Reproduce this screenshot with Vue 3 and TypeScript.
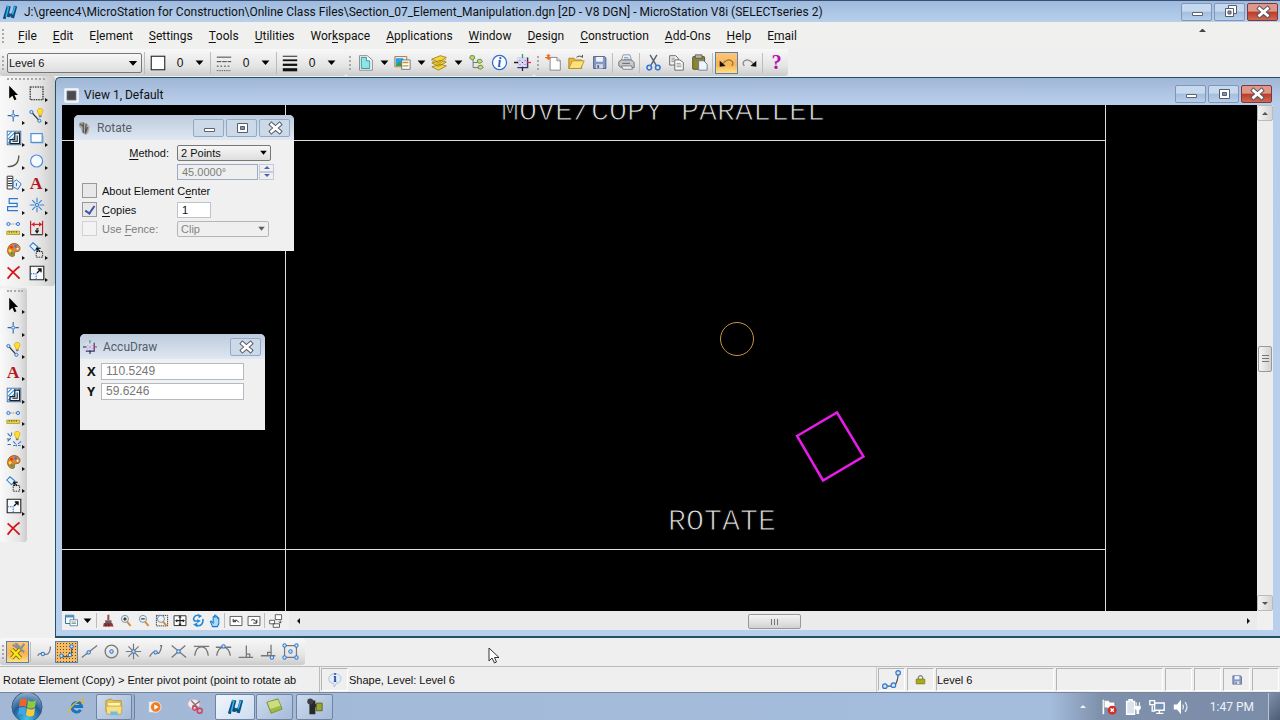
<script setup lang="ts">
import { h, ref } from 'vue'

const blue = '#2f78d0'
const node = (x: number, y: number, r = 2) =>
  `<circle cx="${x}" cy="${y}" r="${r}" fill="#cfe3fb" stroke="${blue}" stroke-width="1.2"/>`
const lensRim = '<circle cx="8.500" cy="7" r="5" fill="#eaf4fb" stroke="#70879b" stroke-width="1.300"/><path d="M11.500 11l5 6" stroke="#d98b35" stroke-width="2.800"/>'
const bulb =
  '<path d="M14 .500c-3 0-4.200 2.600-3.200 4.500l1.600 2.500v2h3.200v-2L17.200 5c1-1.900-.2-4.500-3.200-4.500z" fill="#ffdf2e" stroke="#c79a10" stroke-width=".8"/><path d="M12.400 9.500h3.200v2h-3.200z" fill="#77797c"/>'
const hatch =
  `<rect x="1.500" y="1.500" width="17" height="17" fill="#fff" stroke="#2d5f96" stroke-width="1"/><path d="M2 7l5-5M2 12l10-10M2 17L17 2" stroke="#3f97e0" stroke-width="1.600"/><path d="M17 4v13H5v-5h6V4z" fill="#e6eef6" stroke="#16222e" stroke-width="1.500"/><path d="M14 7v7H8" fill="none" stroke="#16222e" stroke-width="1.300"/>`
const accu =
  '<rect x="3.500" y="3.500" width="13" height="13" fill="#dcd6f6"/><path d="M16 4v12H4" fill="none" stroke="#3b3566" stroke-width="1.700"/><path d="M10 0v5" stroke="#2cab3e" stroke-width="1.500"/><path d="M15 10h5" stroke="#e02f38" stroke-width="1.500"/><path d="M0 10h5M10 15v5" stroke="#222" stroke-width="1.500"/><path d="M9.300 9.300h1.400v1.400H9.300zM6.500 7h1v1h-1zM12.500 7h1v1h-1zM6.500 12h1v1h-1zM12.500 12h1v1h-1z" fill="#444"/>'
const floppy =
  '<path d="M3 3h13l1.500 1.500V17H3z" fill="#8698c5" stroke="#48557f"/><path d="M6 3.500h8V9H6z" fill="#f1f4fa"/><path d="M6 12h8v5H6z" fill="#d5dbe9"/><path d="M7.500 13h2v3.500h-2z" fill="#55628c"/>'
const info =
  '<circle cx="10" cy="10" r="8.300" fill="#fff" stroke="#2c6fd0" stroke-width="1.500"/><text x="10" y="15.500" text-anchor="middle" font-family="Liberation Serif, serif" font-style="italic" font-weight="bold" font-size="16" fill="#1d5fc4">i</text>'
const snapCurve = '<path d="M2 16q4-8 8-4.500t6-8.500h-2" fill="none" stroke="#777" stroke-width="1.500"/>'

const icons: Record<string, string> = {
  logo: '<path d="M1 18L6 2l5 1-2 8c1 2 3 1 4-1l2-8 4 1-4 15-4-1 .5-2c-2 2-4 2-6 0L4.500 19z" fill="#0c4f80"/><path d="M6 3l2 1-3 12M14 3l2 1-3 9" fill="none" stroke="#38b5e8" stroke-width="1.800"/>',
  pointer: '<path d="M4 1v16l4-3.600L10.500 19l2.600-1.200-2.500-5.300H15z" fill="#000"/>',
  fence: '<rect x="1.500" y="2.500" width="16" height="16" fill="none" stroke="#111" stroke-width="1.300" stroke-dasharray="2 1"/>',
  point: `<path d="M9 2.500v4.500M9 12v5M2 9.500h4.500M11.500 9.500H16" stroke="#3565a8" stroke-width="1.400"/>${node(9, 9.5)}`,
  smartline: `<path d="M3 5l10 11" stroke="#333" stroke-width="1.500"/>${node(3, 5)}${node(13, 16)}${bulb}`,
  hatch,
  rect: `<path d="M3 16.500h15V7" fill="none" stroke="#9ab" opacity=".7"/><rect x="2.500" y="4.500" width="14" height="11" fill="#fbfdff" stroke="#4d90dc" stroke-width="1.500"/>`,
  arc: '<path d="M16 3c0 8-4 14-14 14" fill="none" stroke="#55594a" stroke-width="1.700"/>',
  circle: `<circle cx="9.500" cy="10" r="7.500" fill="#f6fbff" stroke="#4d90dc" stroke-width="1.500"/>`,
  pattern: `<path d="M1.500 1.500h7v16h-7z" fill="#fff" stroke="#333" stroke-width="1.200"/><path d="M2 4.500h6M2 7.500h6M2 10.500h6M2 13.500h6" stroke="#333" stroke-width="1.300"/><path d="M9 15V9l4-3 6 5-4 7z" fill="#e3f0fd" stroke="${blue}" stroke-width="1.200"/><path d="M13 10v4" stroke="#333"/>`,
  textA: '<text x="9" y="17" text-anchor="middle" font-family="Liberation Serif, serif" font-weight="bold" font-size="22" fill="#b31820">A</text>',
  curve: `<path d="M15 2H4v6h10v4H2v5h13" fill="none" stroke="${blue}" stroke-width="1.500"/>`,
  burst: `<path d="M10 1v6M10 13v6M1 10h6M13 10h6M4 4l4 4M12 12l4 4M16 4l-4 4M8 12l-4 4" stroke="#3b83cc" stroke-width="1.400"/>${node(10, 10)}`,
  measure: `<path d="M5 5h9" stroke="#888" stroke-dasharray="2 1"/>${node(3, 5)}${node(15, 5)}<path d="M1 14h16v4H1z" fill="#e8d84c" stroke="#a39324"/><path d="M4 14v2M7 14v2M10 14v2M13 14v2" stroke="#594f12"/>`,
  dimension: '<path d="M2 1v17M17 1v17" stroke="#b4232a" stroke-width="1.400"/><path d="M3 5.500h14" stroke="#d9232a" stroke-width="1.500"/><path d="M3 5.500l4-3v6zM16.500 5.500l-4-3v6z" fill="#d9232a"/><path d="M10 15v-4h2M8 13l2 3 2-3M2 18.500h15" fill="none" stroke="#111" stroke-width="1.300"/>',
  palette: '<path d="M10 2C5 2 2 6 2 11c0 4 3 7 6 7 2 0 3-1 2.500-3-.5-2 1-3 3-3 3 0 4-2 4-4 0-4-4-6-7.500-6z" fill="#d98832" stroke="#8a4e17"/><circle cx="7" cy="6.500" r="1.800" fill="#e32"/><circle cx="12" cy="5.500" r="1.700" fill="#37f"/><circle cx="5" cy="11" r="1.800" fill="#ffe040"/><circle cx="7.500" cy="14.500" r="1.900" fill="#3aa84a"/><circle cx="14.500" cy="8.500" r="1.300" fill="#fff"/>',
  manipulate: `<path d="M1 5l4-4 6 5-4 5z" fill="#e7f2fd" stroke="${blue}" stroke-width="1.300"/><path d="M9 12h8v7H9z" fill="none" stroke="#333" stroke-width="1.200" stroke-dasharray="2 1"/><path d="M14 12l-4-4M9.500 7.500l1 5M9.500 7.500l5 .5" stroke="#111" stroke-width="1.500"/>`,
  scale: `<path d="M1.500 1.500h17v17h-17z" fill="#f7f9fc" stroke="#222" stroke-width="1.400"/><path d="M2 11h7v7" fill="none" stroke="${blue}" stroke-width="1.400" stroke-dasharray="2 1"/><path d="M10 10l5-5M11 5h4v4" fill="none" stroke="#111" stroke-width="1.700"/>`,
  del: '<path d="M2 3c5 4 10 9 15 14M17 2C11 6 6 12 2 17" fill="none" stroke="#d3141b" stroke-width="2.200"/>',
  groups: `<path d="M2 3l4 4M2 13l4-4M4 10H1M7 2v4M2 17h4" stroke="#3565a8" stroke-width="1.300"/><path d="M9 13l3 3M19 13l-4 3M13 17v2M9 18h3M15 18h3" fill="none" stroke="${blue}" stroke-width="1.300"/>${bulb}`,
  swatch: '<rect x="2.500" y="2.500" width="15" height="15" fill="#fff" stroke="#222" stroke-width="1.200"/>',
  styles: '<path d="M2 3.500h16" stroke="#333"/><path d="M2 8.500h16" stroke="#333" stroke-dasharray="5 1"/><path d="M2 13.500h16" stroke="#333" stroke-dasharray="2 2"/><path d="M2 18.500h16" stroke="#333" stroke-dasharray="1 1"/>',
  weights: '<path d="M2 2.500h16" stroke="#111"/><path d="M2 7h16" stroke="#111" stroke-width="2"/><path d="M2 12h16" stroke="#111" stroke-width="2.500"/><path d="M2 17.500h16" stroke="#111" stroke-width="3.500"/>',
  models: '<path d="M3 2h9l6 5v12H3z" fill="#fff" stroke="#777"/><path d="M5 4h6v4h4v9H5z" fill="#8fe4e8" stroke="#26868f"/>',
  reference: '<path d="M1 3h14v12H1z" fill="#e8efff" stroke="#a66b24"/><path d="M2 5h9v9H2z" fill="#21a3e8"/><path d="M2 14l4-5 5 5z" fill="#32a048"/><path d="M9 7h10v11H9z" fill="#fff" stroke="#666"/><path d="M10 10h7M10 14h7" stroke="#bc9a28" stroke-width="1.700"/>',
  levels: '<path d="M1 15l10-3 7 2-9 5zM1 10.500l10-3 7 2-9 5zM1 6l10-4 7 2-9 6z" fill="#f2d743" stroke="#9d7d14"/><path d="M1 6v2l8 4 9-6" fill="none" stroke="#bc9c28"/>',
  tree: '<path d="M6 5v11h7M6 10h7" fill="none" stroke="#666"/><path d="M3 2h4l1 3-3 2-3-2zM11 7l4-1 2 3-3 2-3-1zM12 14l4-1 2 3-3 2-3-1z" fill="#b9db7a" stroke="#5f8237"/>',
  info,
  accu,
  newdoc: '<path d="M6 4h8l4 4v11H6z" fill="#fff" stroke="#777"/><path d="M14 4v4h4" fill="#ddd" stroke="#888"/><path d="M4 0v7M0 4h7M2 1l4 5M6 1L2 6" stroke="#e86c26" stroke-width="1.200"/>',
  open: '<path d="M1 5h6l2 2h7v10H1z" fill="#efb83f" stroke="#a77824"/><path d="M1 17l4-9h14l-4 9z" fill="#ffe27a" stroke="#b58a29"/><path d="M10 4c2-2 5-2 7 0V1" fill="none" stroke="#333"/>',
  floppy,
  print: '<path d="M6 1h8l2 7H4z" fill="#f3f8ff" stroke="#888"/><path d="M7 4h5M7 6h7" stroke="#658fc4"/><path d="M1 9l3-2h12l3 3v6H4l-3-2z" fill="#c6c9cd" stroke="#60646b"/><path d="M4 14h12l1 4H6z" fill="#eee" stroke="#70757c"/><path d="M5 11h9" stroke="#555"/>',
  cut: `<path d="M6 1l7 12M14 1L7 13" stroke="#555f6e" stroke-width="1.600"/><circle cx="5" cy="16" r="2.700" fill="none" stroke="${blue}" stroke-width="1.800"/><circle cx="15" cy="16" r="2.700" fill="none" stroke="${blue}" stroke-width="1.800"/>`,
  copy: '<path d="M2 2h7l3 3v8H2z" fill="#f3f3f3" stroke="#555"/><path d="M8 7h6l4 3v9H8z" fill="#fff" stroke="#555"/><path d="M4 5h4M4 7h4M4 9h3M10 11h5M10 13h6M10 15h6" stroke="#888"/>',
  paste: '<rect x="2" y="3" width="14" height="15" rx="1" fill="#8c8430" stroke="#4b4920"/><path d="M5 1h8v4H5z" fill="#b7b8a9" stroke="#555"/><path d="M9 8h6l4 4v7H9z" fill="#eef4fc" stroke="#687482"/>',
  undo: '<path d="M5 12C9 6 14 6 17 9c1 2 0 4-1 5" fill="none" stroke="#8d7543" stroke-width="1.400"/><path d="M2 15V8l7 6z" fill="#111"/>',
  redo: '<path d="M15 12C11 6 6 6 3 9c-1 2 0 4 1 5" fill="none" stroke="#888" stroke-width="1.400"/><path d="M18 15V8l-7 6z" fill="#111"/>',
  help: '<text x="10" y="18" text-anchor="middle" font-family="Liberation Serif, serif" font-weight="bold" font-size="24" fill="#b112b1">?</text>',
  viewattr: '<path d="M2 3h11v11H2z" fill="#fff" stroke="#336fa0" stroke-width="1.300"/><path d="M2 5h11" stroke="#4a90c7" stroke-width="2"/><path d="M8 9h10v8H8z" fill="#fff" stroke="#336fa0"/><path d="M10 12h6M10 14h6" stroke="#558a55"/>',
  brush: '<path d="M9 1h3v8H9z" fill="#a35149"/><path d="M6 9h9v4H6z" fill="#596470"/><path d="M4 13h12l2 5H3z" fill="#a3302b"/><path d="M7 14v4M11 14v4" stroke="#303945" stroke-width="1.600"/>',
  zoomin: lensRim + '<path d="M6 7h5M8.500 4.500v5" stroke="#111" stroke-width="1.500"/>',
  zoomout: lensRim + '<path d="M6 7h5" stroke="#111" stroke-width="1.500"/>',
  windowarea: '<rect x="2" y="2" width="16" height="15" fill="none" stroke="#333" stroke-width="1.300" stroke-dasharray="2 1"/>' + lensRim,
  fit: '<path d="M1.500 2.500h17v14h-17z" fill="#fff" stroke="#333" stroke-width="1.400"/><path d="M10 4v11M4 9.500h12" stroke="#222" stroke-width="1.700"/><path d="M10 2l2.500 3h-5zM10 17l-2.500-3h5zM3 9.500L6 7v5zM17 9.500L14 7v5z" fill="#222"/>',
  rotate: '<path d="M11 2c-6-1-9 5-6 8h5" fill="none" stroke="#2489d8" stroke-width="2.200"/><path d="M17 7c1 8-4 11-9 9" fill="none" stroke="#2489d8" stroke-width="2.200"/><path d="M10 0l6 3-5 3zM9 7l5 3-5 3zM9 12v7l-6-4z" fill="#2489d8"/>',
  hand: '<path d="M5 18L2 11l1-1 3 3V4q1-1 2 0V2q1-1 2 0v2q1-1 2 0v2q2-1 2 0v8l-2 4z" fill="#a8dcff" stroke="#1779c8" stroke-width="1.500"/>',
  prev: '<path d="M1.500 3.500h17v13h-17z" fill="#fff" stroke="#444" stroke-width="1.200"/><path d="M6 11q4-5 8 1M6 7v4h4" fill="none" stroke="#222" stroke-width="1.400"/>',
  next: '<path d="M1.500 3.500h17v13h-17z" fill="#fff" stroke="#444" stroke-width="1.200"/><path d="M6 9q4-3 8 3M14 8v5h-5" fill="none" stroke="#222" stroke-width="1.400"/>',
  copyview: '<path d="M9 1h9v7H9zM1 9h7v5H1zM6 14h9v5H6z" fill="#fff" stroke="#444" stroke-width="1.200"/><path d="M16 9v4M14 11l2 2 2-2" fill="none" stroke="#222"/>',
  accusnap: '<path d="M4 2l13 8M17 1L8 13M7 0l6 6" stroke="#8d9098" stroke-width="2.500"/><path d="M3 7l10 10M12 7L3 17" stroke="#6b6000" stroke-width="4.400"/><path d="M3 7l10 10M12 7L3 17" stroke="#ffe810" stroke-width="2.700"/>',
  near: `<path d="M2 15c2-4 5-3 8-2 5 2 7-4 7-9" fill="none" stroke="#777" stroke-width="1.500"/>${node(8, 13)}`,
  keypoint: `<path d="M4 16h9q4-3 3-11" fill="none" stroke="#555" stroke-width="1.300"/>${node(4, 15)}${node(14, 14)}${node(16, 4)}`,
  midpoint: `<path d="M1 17L19 3" stroke="#777" stroke-width="1.500"/>${node(9, 11)}`,
  center: `<circle cx="10" cy="10" r="7.500" fill="none" stroke="#777" stroke-width="1.500"/>${node(10, 10)}`,
  origin: `<path d="M10 1v18M1 10h18M4 4l12 12M16 4L4 16" stroke="#777" stroke-width="1.400"/>${node(10, 10)}`,
  bisector: `${snapCurve}${node(9, 11)}`,
  intersect: `<path d="M2 3l17 14M18 3L2 17" stroke="#777" stroke-width="1.500"/>${node(10, 10)}`,
  tangent: '<path d="M1 4h18M2 15c2-14 14-14 16 0" fill="none" stroke="#777" stroke-width="1.500"/>',
  tanfrom: `<path d="M1 5h18M2 15c2-13 14-13 16 0" fill="none" stroke="#777" stroke-width="1.500"/>${node(10, 4)}`,
  perp: '<path d="M2 17h17M11 3v14M11 13h4v4" fill="none" stroke="#777" stroke-width="1.500"/>',
  perpfrom: `<path d="M1 15h17M13 2v13M9 15v-4h4" fill="none" stroke="#777" stroke-width="1.500"/>${node(14, 17)}`,
  multi: `<path d="M3 3h14v14H3z" fill="none" stroke="#777" stroke-width="1.400"/>${node(3, 3)}${node(17, 3)}${node(3, 17)}${node(17, 17)}${node(10, 10)}`,
  bubble: '<path d="M10 1c11 0 11 13 2 14l-3 5-1-5C-2 14-1 1 10 1z" fill="#e4eefb" stroke="#9bb0cb"/><text x="10" y="13" text-anchor="middle" font-family="Liberation Serif, serif" font-weight="bold" font-size="17" fill="#17489b">i</text>',
  snapmode: `<path d="M2 17h11q4-5 4-14" fill="none" stroke="#555" stroke-width="1.300"/>${node(3, 17, 2.4)}${node(12, 16, 2.4)}${node(17, 3, 2.4)}`,
  lock: '<path d="M6 9V6q4-6 8 0v3" fill="none" stroke="#777" stroke-width="2"/><rect x="2" y="9" width="16" height="9" rx="1" fill="#a9a91c" stroke="#696900"/>',
  wrench: '<path d="M3 3l4-2 4 2 4 1 3 5-2 8-4 3-5-4-1-5-3-3z" fill="#a9a6a4"/><path d="M4 4l5 4v9M9 2v6M13 4l-1 13M15 9l-3 9" fill="none" stroke="#55504e" stroke-width="1.600"/>',
  viewmark: '<path d="M1 1h18v18H1z" fill="#e9f0f9" stroke="#fff"/><path d="M4 4h12v12H4z" fill="#484b51" stroke="#777"/>',
  min: '<path d="M5.500 10.500h10v3h-10z" fill="#fff" stroke="#596477"/>',
  max: '<path d="M5.500 5.500h10v9h-10z" fill="#fff" stroke="#535d6d"/><path d="M8.500 8.500h4v3h-4z" fill="#8296b0" stroke="#535d6d"/>',
  restore: '<path d="M8.500 3.500h8v8h-8z" fill="#fff" stroke="#535d6d"/><path d="M5.500 6.500h8v8h-8z" fill="#fff" stroke="#535d6d"/><path d="M8 9h3v3H8z" fill="#8296b0" stroke="#535d6d"/>',
  close: '<path d="M6.500 6.500l8 7M14.500 6.500l-8 7" stroke="#4d5360" stroke-width="4.500" stroke-linecap="square"/><path d="M6.500 6.500l8 7M14.500 6.500l-8 7" stroke="#fff" stroke-width="2.700" stroke-linecap="square"/>',
  ie: '<path d="M15 14c-4 5-11 2-10-4S15 3 16 10H7" fill="none" stroke="#1676bf" stroke-width="3.400"/><path d="M2 18C-1 13 12 1 18 2c2 2-1 4-2 5" fill="none" stroke="#e9b42c" stroke-width="1.700"/>',
  folder: '<path d="M1 3l6-2 2 2h9v12H1z" fill="#e7c64f" stroke="#b7912c"/><path d="M3 5h14v11H3z" fill="#fff5ac" stroke="#d7bb62"/><path d="M1 9h18l-1 9H2z" fill="#f6e083" stroke="#c6a543"/><path d="M6 15h8v4H6z" fill="#70bce3"/>',
  media: '<path d="M1 2h11v16H1z" fill="#edf3f8" stroke="#a3b7ca"/><circle cx="11" cy="10" r="7.500" fill="#ee7c22" stroke="#fff"/><path d="M9 6v8l6-4z" fill="#fff"/>',
  snip: '<ellipse cx="8" cy="7" rx="7" ry="5.500" fill="#f7e9ef" stroke="#ccb7c2"/><path d="M5 3l9 10M15 4l-9 6" stroke="#777" stroke-width="1.500"/><circle cx="15" cy="15" r="2.900" fill="none" stroke="#d4415d" stroke-width="1.700"/><circle cx="9" cy="12" r="2.300" fill="none" stroke="#d4415d" stroke-width="1.700"/>',
  green: '<path d="M1 5l13-4 5 12-13 5z" fill="#9dbb3e" stroke="#718c25"/><path d="M2 5l12-3 3 7-12 4z" fill="#cbdc83"/>',
  camera: '<path d="M4 3h7v4h3v4h-3v8H4z" fill="#27292b"/><circle cx="5" cy="4" r="3.500" fill="#3d4042"/><path d="M12 6h7v9h-7z" fill="#9ba638" stroke="#555e17"/>',
  flag: '<path d="M3 1v18" stroke="#fff" stroke-width="2"/><path d="M4 2h6l1 2h6v9H9l-1-2H4z" fill="#fff" stroke="#6b7889" stroke-width=".6"/><circle cx="14" cy="14" r="5.500" fill="#d62b25"/><path d="M12 12l4 4M16 12l-4 4" stroke="#fff" stroke-width="1.700"/>',
  battery: '<path d="M2 3h3V1h4v2h3v16H2z" fill="#dce2eb" stroke="#fff" stroke-width="1.700"/><path d="M14 4v4M18 4v4M13 9h6v3l-2 2v4h-2v-4l-2-2z" fill="#fff" stroke="#fff" stroke-width="1.300"/>',
  network: '<path d="M7 5h12v9H7z" fill="#7590b0" stroke="#fff" stroke-width="1.700"/><path d="M9 18h9M13 14v4M1 2h6v5H1zM4 8v7h4" fill="none" stroke="#fff" stroke-width="1.700"/>',
  sound: '<path d="M1 7h4l5-6v18l-5-6H1z" fill="#fff"/><path d="M12 7q2 3 0 6M15 4q5 6 0 12" fill="none" stroke="#edf2f8" stroke-width="1.400"/>',
  caret: '<path d="M4 7h12l-6 7z" fill="#000"/>',
}

const Icon = (props: { name: string; size?: number }) =>
  h('svg', {
    viewBox: '0 0 20 20',
    width: props.size ?? 20,
    height: props.size ?? 20,
    fill: 'none',
    'aria-hidden': 'true',
    innerHTML: icons[props.name],
  })
Icon.props = ['name', 'size']

const menus = [
  ['', 'F', 'ile'], ['', 'E', 'dit'], ['E', 'l', 'ement'], ['', 'S', 'ettings'], ['', 'T', 'ools'],
  ['', 'U', 'tilities'], ['Wor', 'k', 'space'], ['', 'A', 'pplications'], ['', 'W', 'indow'],
  ['', 'D', 'esign'], ['', 'C', 'onstruction'], ['', 'A', 'dd-Ons'], ['', 'H', 'elp'], ['E', 'm', 'ail'],
]
const attributes = [
  { icon: 'swatch', label: 'Color' },
  { icon: 'styles', label: 'Line style' },
  { icon: 'weights', label: 'Line weight' },
]
const primary = ['models', 'caret', 'reference', 'caret', 'levels', 'caret', 'tree', 'info', 'accu']
const standard = ['newdoc', 'open', 'floppy', '|', 'print', '|', 'cut', 'copy', 'paste', '|', 'undo', 'redo', '|', 'help']
const mainTools = [
  'pointer', 'fence', 'point', 'smartline', 'hatch', 'rect', 'arc', 'circle', 'pattern', 'textA', 'curve',
  'burst', 'measure', 'dimension', 'palette', 'manipulate', 'del', 'scale',
]
const taskTools = ['pointer', 'point', 'smartline', 'textA', 'hatch', 'measure', 'groups', 'palette', 'manipulate', 'scale', 'del']
const viewTools = ['brush', 'zoomin', 'zoomout', 'windowarea', 'fit', 'rotate', 'hand']
const snaps = ['near', 'keypoint', 'midpoint', 'center', 'origin', 'bisector', 'intersect', 'tangent', 'tanfrom', 'perp', 'perpfrom', 'multi']

const about = ref(false)
const copies = ref(true)
const copyCount = ref('1')
const x = ref('110.5249')
const y = ref('59.6246')
</script>

<template>
  <div class="app">
    <header class="titlebar">
      <Icon name="logo" :size="16" />
      <h1>J:\greenc4\MicroStation for Construction\Online Class Files\Section_07_Element_Manipulation.dgn [2D - V8 DGN] - MicroStation V8i (SELECTseries 2)</h1>
      <div class="winbtns">
        <button aria-label="Minimize"><Icon name="min" /></button>
        <button aria-label="Restore"><Icon name="restore" /></button>
        <button class="red" aria-label="Close"><Icon name="close" /></button>
      </div>
    </header>

    <nav class="menubar">
      <i class="grip"></i>
      <button v-for="m in menus" :key="m.join('')">{{ m[0] }}<u>{{ m[1] }}</u>{{ m[2] }}</button>
      <span class="collapse"></span>
    </nav>

    <div class="toolbar">
      <section class="strip attributes">
        <i class="grip"></i>
        <span class="combo level">
          <select aria-label="Active level"><option>Level 6</option></select>
          <Icon name="caret" :size="14" />
        </span>
        <button v-for="a in attributes" :key="a.icon" class="attr" :aria-label="a.label">
          <Icon :name="a.icon" :size="18" /><span>0</span><Icon name="caret" :size="13" />
        </button>
      </section>
      <section class="strip">
        <i class="grip"></i>
        <button v-for="(n, i) in primary" :key="i" class="tb" :class="{ drop: n === 'caret' }" :aria-label="n">
          <Icon :name="n" :size="n === 'caret' ? 13 : 17" />
        </button>
      </section>
      <section class="strip">
        <i class="grip"></i>
        <template v-for="(n, i) in standard" :key="i">
          <i v-if="n === '|'" class="sep"></i>
          <button v-else class="tb" :class="{ active: n === 'undo' }" :aria-label="n"><Icon :name="n" :size="17" /></button>
        </template>
      </section>
    </div>

    <main class="work">
      <aside class="docks">
        <div class="dock main">
          <i class="grip"></i>
          <div class="tools">
            <button v-for="n in mainTools" :key="n" :class="{ flyout: n !== 'pointer' && n !== 'del' }" :aria-label="n"><Icon :name="n" :size="16" /></button>
          </div>
        </div>
        <div class="dock side">
          <i class="grip"></i>
          <div class="tools">
            <button v-for="n in taskTools" :key="n" :class="{ flyout: n !== 'del' }" :aria-label="n"><Icon :name="n" :size="16" /></button>
          </div>
        </div>
      </aside>

      <section class="view">
        <header class="viewtitle">
          <Icon name="viewmark" :size="15" />
          <h2>View 1, Default</h2>
          <div class="winbtns">
            <button aria-label="Minimize view"><Icon name="min" /></button>
            <button aria-label="Maximize view"><Icon name="max" /></button>
            <button class="red" aria-label="Close view"><Icon name="close" /></button>
          </div>
        </header>
        <div class="viewport">
          <div class="canvas">
            <svg class="drawing" width="100%" height="100%">
              <g stroke="#dcdcdc" stroke-width="1" shape-rendering="crispEdges">
                <path d="M223.500 0V2000M1043.500 0V2000M0 35.500H1043M0 444.500H1043" />
              </g>
              <circle cx="675" cy="234" r="16.500" fill="none" stroke="#c8963c" />
              <path d="M735 331L775 307.500L801.500 351.500L761 375.500Z" fill="none" stroke="#e81ce8" stroke-width="2.500" />
              <text x="601" y="15" text-anchor="middle">MOVE/COPY PARALLEL</text>
              <text x="660" y="425" text-anchor="middle">ROTATE</text>
            </svg>

            <form class="dialog rotate" @submit.prevent>
              <header>
                <Icon name="wrench" :size="14" />
                <h3>Rotate</h3>
                <div class="winbtns">
                  <button type="button" aria-label="Minimize dialog"><Icon name="min" /></button>
                  <button type="button" aria-label="Maximize dialog"><Icon name="max" /></button>
                  <button type="button" aria-label="Close dialog"><Icon name="close" /></button>
                </div>
              </header>
              <div class="fields">
                <label class="right" for="method"><u>M</u>ethod:</label>
                <span class="combo method">
                  <select id="method"><option>2 Points</option></select>
                  <Icon name="caret" :size="11" />
                </span>
                <span></span>
                <span class="angle">
                  <input aria-label="Angle" value="45.0000°" disabled />
                  <span class="spin">
                    <button type="button" aria-label="Increase"><i class="up"></i></button>
                    <button type="button" aria-label="Decrease"><i class="down"></i></button>
                  </span>
                </span>
                <label class="check wide"><input v-model="about" type="checkbox" /><span>About Element C<u>e</u>nter</span></label>
                <label class="check"><input v-model="copies" type="checkbox" /><span><u>C</u>opies</span></label>
                <input v-model="copyCount" class="count" aria-label="Number of copies" />
                <label class="check off"><input type="checkbox" disabled /><span>Use <u>F</u>ence:</span></label>
                <span class="combo fencemode">
                  <select aria-label="Fence mode" disabled><option>Clip</option></select>
                  <Icon name="caret" :size="11" />
                </span>
              </div>
            </form>

            <form class="dialog accudraw" @submit.prevent>
              <header>
                <Icon name="accu" :size="14" />
                <h3>AccuDraw</h3>
                <div class="winbtns"><button type="button" aria-label="Close AccuDraw"><Icon name="close" /></button></div>
              </header>
              <div class="coords">
                <label for="cx">X</label><input id="cx" v-model="x" />
                <label for="cy">Y</label><input id="cy" v-model="y" />
              </div>
            </form>
          </div>
          <div class="vscroll">
            <button class="end" aria-label="Scroll up"><i class="up"></i></button>
            <div class="track"><span class="thumb"></span></div>
            <button class="end" aria-label="Scroll down"><i class="down"></i></button>
          </div>
        </div>
        <footer class="viewbar">
          <button aria-label="View attributes"><Icon name="viewattr" :size="15" /></button>
          <button class="drop" aria-label="More"><Icon name="caret" :size="13" /></button>
          <i class="sep"></i>
          <div class="group">
            <button v-for="n in viewTools" :key="n" :aria-label="n"><Icon :name="n" :size="14" /></button>
          </div>
          <i class="sep"></i>
          <button aria-label="Previous view"><Icon name="prev" :size="14" /></button>
          <button aria-label="Next view"><Icon name="next" :size="14" /></button>
          <i class="sep"></i>
          <button aria-label="Copy view"><Icon name="copyview" :size="14" /></button>
          <div class="hscroll">
            <button aria-label="Scroll left"><i class="left"></i></button>
            <div class="track"><span class="thumb"></span></div>
            <button aria-label="Scroll right"><i class="rightward"></i></button>
          </div>
          <i class="corner"></i>
        </footer>
      </section>
    </main>

    <div class="snapbar">
      <section class="strip">
        <i class="grip"></i>
        <button class="tb active" aria-label="AccuSnap"><Icon name="accusnap" :size="18" /></button>
        <i class="sep"></i>
        <div class="group">
          <button v-for="n in snaps" :key="n" :class="{ active: n === 'keypoint', dotted: n === 'keypoint' }" :aria-label="n"><Icon :name="n" :size="17" /></button>
        </div>
      </section>
    </div>

    <footer class="status">
      <span class="prompt">Rotate Element (Copy) &gt; Enter pivot point (point to rotate ab</span>
      <span class="cell"><Icon name="bubble" :size="14" /></span>
      <span class="message">Shape, Level: Level 6</span>
      <span class="cell"><Icon name="snapmode" :size="19" /></span>
      <span class="cell"><Icon name="lock" :size="11" /></span>
      <span class="cell activelevel">Level 6</span>
      <span class="cell selection"></span>
      <span class="cell"></span>
      <span class="cell"></span>
      <span class="cell"><Icon name="floppy" :size="12" /></span>
      <span class="cell"></span>
    </footer>

    <footer class="taskbar">
      <button class="orb" aria-label="Start">
        <svg viewBox="0 0 32 32" width="32" height="32" aria-hidden="true">
          <defs>
            <radialGradient id="orb" cx=".5" cy=".9" r=".9">
              <stop offset="0" stop-color="#42c5ea" /><stop offset=".55" stop-color="#205f9c" /><stop offset="1" stop-color="#9ab4cb" />
            </radialGradient>
          </defs>
          <circle cx="16" cy="16" r="15" fill="url(#orb)" stroke="#3c5c7c" />
          <path d="M9 9q4-3 7 0l-1 7q-4-2-7 0z" fill="#ee6528" />
          <path d="M17 9q4 3 8 0l-1 7q-4 3-8 0z" fill="#8fc93c" />
          <path d="M8 17q4-2 7 0l-1 7q-4-2-7 0z" fill="#42a5e8" />
          <path d="M16 17q4 3 8 0l-1 7q-4 3-8 0z" fill="#fbc93a" />
        </svg>
      </button>
      <button class="task" aria-label="Internet Explorer"><Icon name="ie" :size="17" /></button>
      <button class="task open stacked" aria-label="Windows Explorer"><Icon name="folder" :size="18" /></button>
      <button class="task" aria-label="Media Player"><Icon name="media" :size="14" /></button>
      <button class="task" aria-label="Snipping Tool"><Icon name="snip" :size="17" /></button>
      <button class="task open current" aria-label="MicroStation"><Icon name="logo" :size="17" /></button>
      <button class="task open" aria-label="Camtasia"><Icon name="green" :size="17" /></button>
      <button class="task open" aria-label="Recorder"><Icon name="camera" :size="17" /></button>
      <div class="tray">
        <button aria-label="Show hidden icons"><i class="up"></i></button>
        <Icon name="flag" :size="16" />
        <Icon name="battery" :size="16" />
        <Icon name="network" :size="16" />
        <Icon name="sound" :size="16" />
        <time>1:47 PM</time>
        <button class="desktop" aria-label="Show desktop"></button>
      </div>
    </footer>

    <svg class="cursor" viewBox="0 0 12 18" width="12" height="18" aria-hidden="true">
      <path d="M1 1v13l3-3 2.500 5 2-1-2-4.500H11z" fill="#fff" stroke="#333" />
    </svg>
  </div>
</template>

<style>
html,
body {
  margin: 0;
}
</style>

<style scoped>
.app {
  position: relative;
  display: flex;
  flex-direction: column;
  height: 100vh;
  overflow: hidden;
  background: #efefef;
  color: #111;
  font: 11px 'Liberation Sans', Arial, sans-serif;
}
.app * {
  box-sizing: border-box;
}
svg {
  display: block;
  flex: none;
}
button {
  display: flex;
  align-items: center;
  justify-content: center;
  padding: 0;
  border: 0;
  background: none;
  color: inherit;
  font: inherit;
}
h1,
h2,
h3 {
  flex: 1;
  margin: 0;
  font: 12px Roboto, 'Open Sans', sans-serif;
  white-space: nowrap;
}
u {
  text-underline-offset: 2px;
}
.titlebar {
  display: flex;
  align-items: center;
  gap: 6px;
  height: 22px;
  padding: 0 2px;
  border-top: 1px solid #3d4e6c;
  background: linear-gradient(#9dbbe0, #b9cfea);
}
.winbtns {
  display: flex;
  gap: 2px;
}
.winbtns button {
  width: 31px;
  height: 18px;
  border: 1px solid #7f96b8;
  border-radius: 2px;
  background: linear-gradient(#c7d9ef 45%, #a3bddd 50%, #b7d0ec);
}
.winbtns .red {
  border-color: #7a3940;
  background: linear-gradient(#df9788 45%, #bd3a28 50%, #cf6a52);
}
.menubar {
  display: flex;
  align-items: center;
  gap: 16px;
  height: 27px;
  background: #f0f0ee;
  font: 12px Roboto, 'Open Sans', sans-serif;
}
.menubar .grip {
  width: 1px;
  margin-left: 2px;
  margin-right: -2px;
}
.grip {
  flex: none;
  width: 3px;
  height: 14px;
  border-left: 2px dotted #aaa;
}
.collapse {
  width: 7px;
  margin: 0 74px 10px auto;
  border: 3px solid transparent;
  border-top: 0;
  border-bottom-color: #444;
}
.toolbar {
  display: flex;
  height: 27px;
}
.strip {
  display: flex;
  align-items: center;
  height: 27px;
  border-radius: 3px;
  background: linear-gradient(#f8f8f8, #e4e4e4 65%, #cbcbcb);
}
.strip .grip {
  margin: 0 2px 0 2px;
}
.attributes {
  width: 346px;
}
.toolbar .strip + .strip .grip {
  margin-left: 3px;
  margin-right: 2px;
}
.combo {
  position: relative;
  display: flex;
  align-items: center;
}
.combo select {
  width: 100%;
  height: 100%;
  padding: 0 3px;
  border: 1px solid #777;
  border-radius: 2px;
  background: linear-gradient(#f7f7f7, #dedede);
  color: #111;
  font: inherit;
  appearance: none;
}
.combo svg {
  position: absolute;
  right: 2px;
  pointer-events: none;
}
.level {
  width: 135px;
  height: 20px;
  margin-right: 2px;
}
.level select {
  padding: 0 1px;
}
.attr {
  width: 66px;
  height: 22px;
  gap: 10px;
  border-left: 1px solid #bbb;
}
.attr span {
  font-size: 12px;
}
.tb {
  width: 23px;
  height: 22px;
}
.tb.drop {
  width: 14px;
}
.active {
  border: 1px solid #5d7fa8;
  background: linear-gradient(#fbc77c, #f8b552 60%, #ffdf8c);
}
.dotted {
  background:
    radial-gradient(#6b4818 0 1px, transparent 1px) 0 0 / 3px 3px,
    #f6bd68;
}
.sep {
  flex: none;
  width: 1px;
  height: 20px;
  margin: 0 2px 0 1px;
  background: #bdbdbd;
}
.work {
  display: flex;
  flex: 1;
  min-height: 0;
}
.docks {
  display: flex;
  flex-direction: column;
  width: 55px;
}
.dock {
  padding: 2px 0 2px 2px;
  border-radius: 3px;
  background: linear-gradient(90deg, #f9f9f9, #e6e6e6 70%, #cccccc);
}
.dock .grip {
  display: block;
  width: 38px;
  height: 4px;
  margin-left: 5px;
  border: 0;
  border-top: 2px dotted #aaa;
}
.side {
  width: 27px;
  margin-top: 2px;
}
.dock.side .grip {
  width: 16px;
}
.tools {
  display: grid;
}
.main .tools {
  grid-template-columns: 23px 23px;
  grid-template-rows: repeat(9, 1fr);
  height: 202px;
}
.side .tools {
  grid-template-columns: 23px;
  grid-template-rows: repeat(11, 1fr);
  height: 246px;
}
.tools button {
  position: relative;
}
.flyout::after {
  content: '';
  position: absolute;
  right: 0;
  bottom: 2px;
  border: 2px solid transparent;
  border-left: 3px solid #111;
  border-right: 0;
}
.view {
  display: flex;
  flex: 1;
  flex-direction: column;
  min-width: 0;
  padding: 0 7px 6px 6px;
  margin-top: 1px;
  border: 1px solid #1d5364;
  border-width: 1px 0 2px 1px;
  border-radius: 5px 0 0 0;
  background: linear-gradient(#9fb6d6, #b8cde9 24px, #b9cfeb);
}
.viewtitle {
  display: flex;
  align-items: center;
  gap: 5px;
  height: 27px;
  padding: 7px 1px 0 2px;
}
.viewtitle .winbtns {
  margin-bottom: 2px;
}
.viewport {
  display: flex;
  flex: 1;
  min-height: 0;
}
.canvas {
  position: relative;
  flex: 1;
  overflow: hidden;
  background: #000;
}
.drawing {
  position: absolute;
}
.drawing text {
  fill: #e2e2e2;
  stroke: #000;
  stroke-width: 1px;
  font: 30px 'Liberation Mono', monospace;
}
.dialog {
  position: absolute;
  border-radius: 5px 5px 0 0;
  background: #f0f0f0;
}
.dialog header {
  display: flex;
  align-items: center;
  gap: 5px;
  height: 25px;
  padding: 0 4px 0 3px;
  border-radius: 5px 5px 0 0;
  background: linear-gradient(#bccbdc, #ced9e7 50%, #dfe8f3);
  color: #555d68;
}
.dialog h3 {
  padding-left: 1px;
}
.dialog .winbtns button {
  border-color: #94a9c4;
  background: #cbd9e9;
}
.rotate {
  left: 12px;
  top: 10px;
  width: 220px;
  height: 136px;
}
.fields {
  display: grid;
  grid-template-columns: 87px 97px;
  grid-auto-rows: 19px;
  column-gap: 8px;
  align-items: center;
  padding: 3px 8px;
}
.right {
  text-align: right;
}
.method {
  width: 94px;
  height: 16px;
}
.fencemode {
  width: 92px;
  height: 16px;
}
.fencemode select {
  border-color: #b5b5b5;
  background: #efefef;
  color: #858585;
  opacity: 1;
}
.fencemode svg {
  opacity: 0.6;
}
.angle {
  display: flex;
  gap: 1px;
}
.dialog input:not([type='checkbox']) {
  height: 16px;
  padding: 0 4px;
  border: 1px solid #bcc3cc;
  background: #fff;
  color: #111;
  font: inherit;
}
.dialog .angle input {
  width: 81px;
  border-color: #9dabc4;
  background: #efefef;
  color: #7d7d7d;
}
.spin {
  display: grid;
  grid-template-rows: 8px 8px;
}
.spin button {
  width: 15px;
  border: 1px solid #c4cbd8;
  color: #4b66ad;
}
.up,
.down,
.left,
.rightward {
  border: 3px solid transparent;
}
.up {
  border-top: 0;
  border-bottom-color: currentColor;
}
.down {
  border-bottom: 0;
  border-top-color: currentColor;
}
.left {
  border-left: 0;
  border-right-color: currentColor;
}
.rightward {
  border-right: 0;
  border-left-color: currentColor;
}
.check {
  display: flex;
  align-items: center;
  gap: 5px;
}
.wide {
  grid-column: 1 / 3;
}
.off {
  color: #7d7d7d;
}
.check input {
  position: relative;
  width: 15px;
  height: 15px;
  margin: 0;
  border: 1px solid #999;
  background: #e8e8e8;
  appearance: none;
}
.check input:checked::after {
  content: '';
  position: absolute;
  left: 4px;
  top: 1px;
  width: 4px;
  height: 8px;
  border: solid #3f55a5;
  border-width: 0 2px 2px 0;
  transform: rotate(35deg);
}
.off input {
  border-color: #d2d2d2;
  background: #f3f3f3;
}
.count {
  width: 34px;
}
.accudraw {
  left: 18px;
  top: 229px;
  width: 185px;
  height: 96px;
}
.coords {
  display: grid;
  grid-template-columns: 9px 143px;
  grid-auto-rows: 20px;
  column-gap: 5px;
  align-items: center;
  padding: 2px 7px;
  font-size: 12px;
}
.coords label {
  font: bold 13px 'Open Sans', 'Noto Sans', sans-serif;
}
.dialog .coords input {
  height: 17px;
  border-color: #b3bac2;
  color: #777;
}
.vscroll {
  display: flex;
  flex-direction: column;
  width: 16px;
  background: #ededed;
}
.end {
  height: 16px;
  border: 1px solid #bbb;
  border-radius: 2px;
  background: linear-gradient(90deg, #f3f3f3, #d5d5d5);
  color: #555;
}
.vscroll .track {
  position: relative;
  flex: 1;
}
.thumb {
  position: absolute;
  border: 1px solid #999;
  border-radius: 2px;
}
.vscroll .thumb {
  top: 47%;
  left: 1px;
  width: 14px;
  height: 26px;
  margin-top: 2px;
  background:
    repeating-linear-gradient(#777 0 1px, transparent 1px 3px) 50% 50% / 7px 7px no-repeat,
    linear-gradient(90deg, #f4f4f4, #d2d2d2);
}
.viewbar {
  display: flex;
  align-items: center;
  height: 19px;
  background: #f0f0f0;
}
.viewbar button {
  width: 18px;
  height: 19px;
}
.viewbar .drop {
  width: 15px;
}
.viewbar .sep {
  height: 15px;
}
.viewbar .group {
  display: grid;
  grid-template-columns: repeat(7, 1fr);
  width: 124px;
}
.hscroll {
  display: flex;
  flex: 1;
  margin-left: 4px;
  background: #ebebeb;
}
.hscroll .track {
  position: relative;
  flex: 1;
}
.hscroll .thumb {
  top: 3px;
  left: 47%;
  width: 53px;
  height: 15px;
  margin-left: 3px;
  background:
    repeating-linear-gradient(90deg, #777 0 1px, transparent 1px 3px) 50% 50% / 7px 6px no-repeat,
    linear-gradient(#f4f4f4, #d2d2d2);
}
.corner {
  width: 16px;
}
.snapbar {
  height: 28px;
}
.snapbar .strip {
  width: 305px;
}
.snapbar .tb {
  width: 23px;
}
.snapbar .strip .grip {
  margin: 0 1px 0 2px;
}
.snapbar .group {
  display: grid;
  grid-template-columns: repeat(12, 1fr);
  width: 269px;
}
.snapbar .group button {
  height: 22px;
}
.status {
  display: flex;
  height: 27px;
  border-top: 1px solid #bbb;
  border-bottom: 1px solid #79879c;
  line-height: 26px;
  white-space: nowrap;
}
.prompt {
  width: 320px;
  padding-left: 3px;
  border-right: 1px solid #bbb;
}
.cell {
  display: flex;
  align-items: center;
  justify-content: center;
  width: 27px;
  margin: 1px 1px 1px 1px;
  border: 1px solid #b5b5b5;
  border-right-color: #fff;
  border-bottom-color: #fff;
}
.message {
  flex: 1;
  border-right: 1px solid #ccc;
}
.activelevel {
  justify-content: flex-start;
  width: 118px;
}
.selection {
  width: 107px;
}
.taskbar {
  display: flex;
  align-items: center;
  height: 27px;
  padding-left: 11px;
  background: linear-gradient(90deg, #a2b8d5, #a5bddd 82%, #7e90ab 86%, #7a8ca8);
}
.orb {
  height: 27px;
  overflow: hidden;
  margin-right: 13px;
}
.task {
  width: 40px;
  height: 26px;
}
.taskbar .open {
  width: 37px;
  margin-right: 3px;
  border: 1px solid #71839f;
  border-radius: 2px;
  background: linear-gradient(135deg, #cbdaee, #a6bbd8);
}
.taskbar .stacked {
  width: 36px;
  box-shadow: 2px 0 0 #9eb3d0, 3px 0 0 #71839f;
}
.taskbar .current {
  width: 40px;
  margin-right: 1px;
  background: linear-gradient(135deg, #f1f6fc, #cbdcf1);
}
.tray {
  display: flex;
  align-items: center;
  gap: 8px;
  height: 27px;
  margin-left: auto;
  color: #eef3fa;
}
.tray > button:first-child {
  width: 20px;
}
.tray time {
  margin: 0 6px 0 13px;
  font: 12px Roboto, 'Open Sans', sans-serif;
}
.desktop {
  width: 12px;
  height: 27px;
  border-left: 1px solid #b6c4d8;
  background: linear-gradient(135deg, #8191aa, #4e5d75);
}
.cursor {
  position: absolute;
  left: 488px;
  top: 647px;
}
</style>
